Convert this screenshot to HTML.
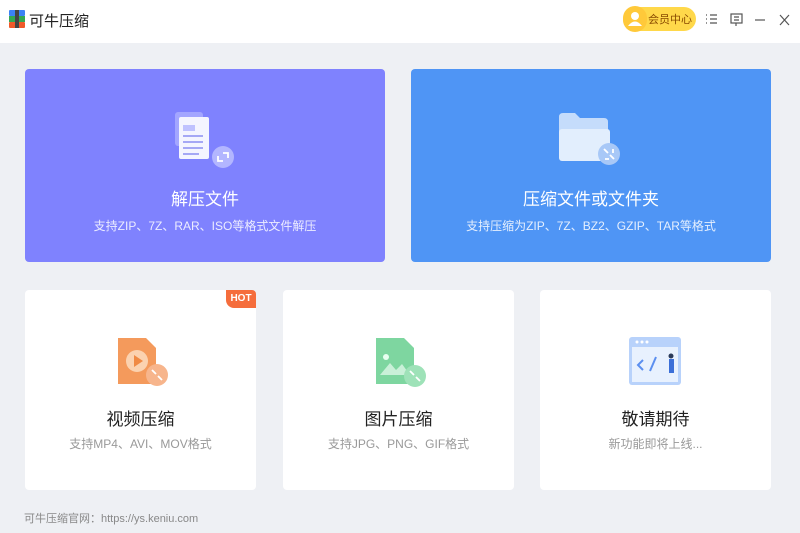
<!DOCTYPE html>
<html><head><meta charset="utf-8"><style>
*{margin:0;padding:0;box-sizing:border-box}
body{width:800px;height:533px;background:#eef0f4;font-family:"Liberation Sans","Noto Sans CJK SC",sans-serif;position:relative;overflow:hidden}
.top{position:absolute;left:0;top:0;width:800px;height:43px;background:#fff}
.card{position:absolute;border-radius:4px;text-align:center}
.big{top:69px;height:193px;width:360px;color:#fff}
.big .t{position:absolute;top:116px;width:100%;font-size:17px}
.big .s{position:absolute;top:148px;width:100%;font-size:12px;color:rgba(255,255,255,.85)}
.sm{top:290px;height:200px;width:231px;background:#fff}
.sm .t{position:absolute;top:115px;width:100%;font-size:17px;color:#222}
.sm .s{position:absolute;top:145px;width:100%;font-size:12px;color:#999}
.ic{position:absolute}
</style></head><body>
<div class="top">
 <svg style="position:absolute;left:9px;top:10px" width="16" height="18"><rect x="0" y="0" width="16" height="6" fill="#3b82f6" rx="1"/><rect x="0" y="6" width="16" height="6" fill="#34a853"/><rect x="0" y="12" width="16" height="6" fill="#f0592a" rx="1"/><rect x="6" y="0" width="4" height="18" fill="#444"/></svg>
 <div style="position:absolute;left:29px;top:10px;font-size:15px;color:#222">可牛压缩</div>
 <div style="position:absolute;left:623px;top:7px;width:73px;height:24px;border-radius:12px;background:#ffd84a"></div>
 <div style="position:absolute;left:623px;top:6px;width:24px;height:26px;border-radius:13px;background:#ffc93a"></div>
 <svg style="position:absolute;left:628px;top:11px" width="14" height="16"><circle cx="7" cy="5" r="4" fill="#fff"/><path d="M0 15 Q7 6 14 15Z" fill="#fff"/></svg>
 <div style="position:absolute;left:648px;top:11px;font-size:11px;color:#8a4b00">会员中心</div>
 <svg style="position:absolute;left:705px;top:13px" width="90" height="14" fill="none" stroke="#555" stroke-width="1.2"><path d="M1 2h1M5 2h7M1 6h1M5 6h7M1 10h1M5 10h7"/><rect x="26" y="1" width="11" height="9"/><path d="M29 4h5M29 7h5M31 10v3"/><path d="M50 7h10"/><path d="M75 2l9 10M84 2l-9 10"/></svg>
</div>

<div class="card big" style="left:25px;background:#7f82fe">
 <svg class="ic" style="left:148px;top:40px" width="64" height="64"><rect x="2" y="3" width="28" height="34" rx="3" fill="#a3a6ff"/><rect x="6" y="8" width="30" height="42" rx="2" fill="#f4f5ff"/><rect x="10" y="16" width="12" height="6" fill="#bfc2ff"/><path d="M10 27h20M10 33h20M10 39h20M10 45h16" stroke="#a5a8f5" stroke-width="2"/><circle cx="50" cy="48" r="11" fill="#b3b6ff"/><path d="M45 47v5h5M55 49v-5h-5" stroke="#fff" stroke-width="1.8" fill="none"/></svg>
 <div class="t">解压文件</div>
 <div class="s">支持ZIP、7Z、RAR、ISO等格式文件解压</div>
</div>
<div class="card big" style="left:411px;background:#4f95f5">
 <svg class="ic" style="left:145px;top:40px" width="70" height="64"><path d="M3 8 q0-4 4-4h12l5 5h24q4 0 4 4v36H3Z" fill="#c5dcfb"/><rect x="3" y="20" width="51" height="32" rx="3" fill="#e2eefd"/><circle cx="53" cy="45" r="11" fill="#a8c8f7"/><path d="M48 40l4 4M58 50l-4-4M49 50h4M57 40v4" stroke="#fff" stroke-width="1.8" fill="none"/></svg>
 <div class="t">压缩文件或文件夹</div>
 <div class="s">支持压缩为ZIP、7Z、BZ2、GZIP、TAR等格式</div>
</div>

<div class="card sm" style="left:25px">
 <div style="position:absolute;right:0;top:0;width:30px;height:18px;background:#f56d3c;border-radius:0 4px 0 8px;color:#fff;font-size:10px;font-weight:bold;line-height:18px">HOT</div>
 <svg class="ic" style="left:90px;top:45px" width="56" height="58"><path d="M3 3h28l10 10v36H3Z" fill="#f49a5c"/><circle cx="22" cy="26" r="11" fill="#fbd2b0"/><path d="M19 20v12l9-6Z" fill="#f08a45"/><circle cx="42" cy="40" r="11" fill="#f7b58c"/><path d="M37 35l4 4M47 45l-4-4" stroke="#fff" stroke-width="1.8"/></svg>
 <div class="t">视频压缩</div>
 <div class="s">支持MP4、AVI、MOV格式</div>
</div>
<div class="card sm" style="left:283px">
 <svg class="ic" style="left:90px;top:45px" width="56" height="58"><path d="M3 3h28l10 10v36H3Z" fill="#7ed6a0"/><circle cx="13" cy="22" r="3" fill="#e8fff0"/><path d="M7 40l10-12 6 7 6-6 8 11Z" fill="#c9f0d8"/><circle cx="42" cy="41" r="11" fill="#9ee2b8"/><path d="M37 36l4 4M47 46l-4-4" stroke="#fff" stroke-width="1.8"/></svg>
 <div class="t">图片压缩</div>
 <div class="s">支持JPG、PNG、GIF格式</div>
</div>
<div class="card sm" style="left:540px">
 <svg class="ic" style="left:86px;top:45px" width="60" height="58"><rect x="3" y="2" width="52" height="48" rx="3" fill="#b8d2fb"/><rect x="6" y="12" width="46" height="35" fill="#e8f1fe"/><circle cx="11" cy="7" r="1.5" fill="#fff"/><circle cx="16" cy="7" r="1.5" fill="#fff"/><circle cx="21" cy="7" r="1.5" fill="#fff"/><path d="M17 25l-5 5 5 5M30 22l-6 14" stroke="#5b8ff0" stroke-width="2" fill="none"/><rect x="43" y="24" width="5" height="14" fill="#3b6fd8"/><circle cx="45" cy="21" r="2.5" fill="#2a3a5a"/></svg>
 <div class="t">敬请期待</div>
 <div class="s">新功能即将上线...</div>
</div>

<div style="position:absolute;left:24px;top:510px;font-size:11px;color:#888">可牛压缩官网：https://ys.keniu.com</div>
</body></html>
